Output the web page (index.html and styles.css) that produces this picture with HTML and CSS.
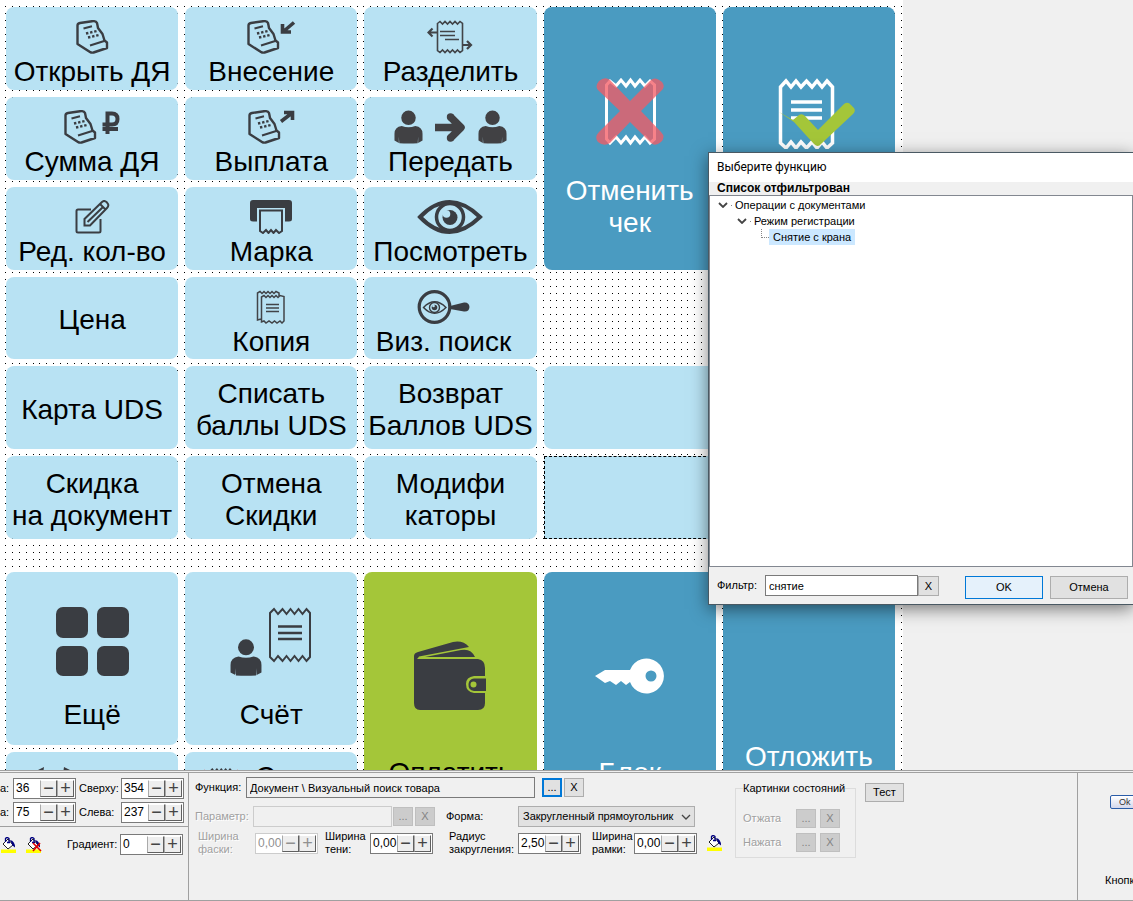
FILE: index.html
```html
<!DOCTYPE html>
<html lang="ru">
<head>
<meta charset="utf-8">
<title>Редактор клавиатуры</title>
<link rel="stylesheet" href="styles.css">
</head>
<body>
<svg class="defs" aria-hidden="true">
  <symbol id="register" viewBox="0 0 33 34">
    <path d="M1.500 24V5.500Q1.500 3.500 4 3L16 1.200Q20 .800 21 3Q21.500 5 22 8L26.500 14L28.500 20.500L31 22.500V28L17.500 32.500Q15.500 33 14 32Z" fill="none" stroke="#3a3d42" stroke-width="2.400" stroke-linejoin="round"/>
    <path d="M14 25.500L29 20.800M7.500 8.500L16 6.300" fill="none" stroke="#3a3d42" stroke-width="2"/>
    <path d="M10 13.500L21 11M12 17.500L23 15" fill="none" stroke="#3a3d42" stroke-width="2.400" stroke-dasharray="2.400 1.800"/>
  </symbol>
  <symbol id="person" viewBox="0 0 30 34">
    <circle cx="15" cy="7.500" r="7.500"/>
    <path d="M8 16Q15 18.500 22 16Q29.500 17 29.500 24V31L25 33.500V27L24.500 33.800Q15 34.500 5.500 33.800L5 27V33.500L.5 31V24Q.5 17 8 16Z"/>
  </symbol>
  <symbol id="receipt" viewBox="0 0 44 56">
    <path d="M2 6L6 2L10 7L14.500 2L18.500 7L22.500 2L26.500 7L30.500 2L34.500 7L38.500 2L42 6V50L38.500 54L34.500 49L30.500 54L26.500 49L22.500 54L18.500 49L14.500 54L10 49L6 54L2 50Z" fill="none" stroke="currentColor" stroke-width="2"/>
    <path d="M10 19.500H34M10 26H34M10 32H34" stroke="currentColor" stroke-width="2.300"/>
  </symbol>
  <symbol id="bucket" viewBox="0 0 16 16">
    <path d="M0 12.500H15V16H0Z" fill="#ff0"/>
    <path d="M2 7L7 2L12 8L7 12Z" fill="#fff" stroke="#222" stroke-width="1"/>
    <path d="M4.500 5V1.500Q6 -.5 8 1.500V6M6 5.500H9" fill="none" stroke="#00007f" stroke-width="1.300"/>
    <path d="M9 3Q14 4 14 10.500L11.500 8.500Z" fill="#00007f"/>
  </symbol>
</svg>
<div class="app">
  <main class="workspace">
    <section class="board">
      <div class="pad pad-top">
        <button class="tile"><svg width="33" height="34"><use href="#register"/></svg><span>Открыть ДЯ</span></button>
        <button class="tile"><svg width="49" height="34" viewBox="0 0 49 34"><use href="#register" width="33" height="34"/><path d="M47 2.500L37 11M35.500 4V12H44" fill="none" stroke="#3a3d42" stroke-width="3.600"/></svg><span>Внесение</span></button>
        <button class="tile"><svg width="46" height="34" viewBox="0 0 46 34"><g fill="none" stroke="#414448"><path d="M10.500 3.500L13 1.500L15.500 4L18 1.500L20.500 4L23 1.500L25.500 4L28 1.500L30.500 4L33 1.500L35.500 3.500V30.500L33 32.500L30.500 30L28 32.500L25.500 30L23 32.500L20.500 30L18 32.500L15.500 30L13 32.500L10.500 30.500Z" stroke-width="1.600"/><path d="M13 11.500H28M13 15.500H28M18 19.500H32" stroke-width="1.400"/><path d="M10 12.500H2M5.500 8.500L1.500 12.500L5.500 16.500M35 25H43M40 21L44 25L40 29" stroke-width="2.200"/></g></svg><span>Разделить</span></button>
        <button class="tile tall dark"><svg width="68" height="69" viewBox="0 0 68 69"><path d="M10.500 62V8L14 4L20 9L25 3L30 9L34.500 3L39 9L44 3L49 9L54 4L58.500 8V62L54 66L49 60L44 66L39 60L34.500 66L30 60L25 66L20 60L14 66Z" fill="none" stroke="#fff" stroke-width="3"/><path d="M34 24L55 3Q59-1 66 5Q70 10 65 14L45 34L65 55Q70 60 65 65Q59 70 55 66L34 45L14 66Q8 70 2 65Q-2 60 3 55L24 34L3 14Q-2 10 3 4Q9-1 14 3Z" fill="#f45b64" fill-opacity=".76"/></svg><span>Отменить<br>чек</span></button>
        <button class="tile tall dark" aria-label="Закрыть чек"><svg class="shift" width="78" height="72" viewBox="0 0 78 72"><path d="M2.500 66V10L8 4L13 10L18 4L23 10L28.500 4L34 10L39 4L44 10L49 4L54.500 10V66L49 71L44 65L39 71L34 65L28.500 71L23 65L18 71L13 65L8 71Z" fill="none" stroke="#fff" stroke-width="3.500"/><path d="M13 25H44M13 33H44M13 41H44" stroke="#fff" stroke-width="3.500"/><path d="M1 35L15 43L21 38Q24 36 27 39L40 53L66 27Q70 24 73 28L76 31Q78 34 75 37L43 67Q40 71 36 67L16 45Z" fill="#a4c639"/></svg></button>

        <button class="tile"><svg width="57" height="34" viewBox="0 0 57 34"><use href="#register" width="33" height="34"/><path d="M43.500 24V3.500H48Q53.500 3.500 53.500 9Q53.500 14.500 48 14.500H38.500M38.500 19H54" fill="none" stroke="#3a3d42" stroke-width="4"/></svg><span>Сумма ДЯ</span></button>
        <button class="tile"><svg width="47" height="34" viewBox="0 0 47 34"><use href="#register" width="33" height="34"/><path d="M33 11.500L44 3M36 2.500H44.500V10" fill="none" stroke="#3a3d42" stroke-width="3.600"/></svg><span>Выплата</span></button>
        <button class="tile"><svg width="113" height="34" viewBox="0 0 113 34" fill="#414144"><use href="#person" width="29" height="34"/><use href="#person" x="84" width="29" height="34"/><path d="M41 17.500H66M56.500 7L67 17.500L56.500 28" fill="none" stroke="#414144" stroke-width="7.500" stroke-linejoin="round"/><circle cx="56.500" cy="7" r="3.700"/><circle cx="56.500" cy="28" r="3.700"/></svg><span>Передать</span></button>

        <button class="tile"><svg width="35" height="34" viewBox="0 0 35 34"><g fill="none" stroke="#3a3d42" stroke-width="2"><path d="M16 9.500H3Q1.500 9.500 1.500 11V31Q1.500 32.500 3 32.500H24Q25.500 32.500 25.500 31V19"/><path d="M9.500 25.500V19L27 2Q29-.0 31.500 2L33 4Q34 6 32 8L15 25.500ZM25 4L31 10M12.500 22L28 7"/></g></svg><span>Ред. кол-во</span></button>
        <button class="tile"><svg width="42" height="34" viewBox="0 0 42 34"><path d="M3 0H39Q42 0 42 3V19Q42 21.500 39 21.500H35V8H7V21.500H3Q0 21.500 0 19V3Q0 0 3 0Z" fill="#3a3d42"/><path d="M10 10.500H32V31L29 33L26 30L23.500 33L21 30L18.500 33L16 30L13 33L10 31Z" fill="#b8e2f3" stroke="#3a3d42" stroke-width="2"/></svg><span>Марка</span></button>
        <button class="tile"><svg width="66" height="34" viewBox="0 0 66 34"><path d="M3 17Q32-13 63 17Q32 47 3 17Z" fill="none" stroke="#3a3d42" stroke-width="4"/><circle cx="33" cy="17" r="13.500" fill="none" stroke="#3a3d42" stroke-width="3.500"/><circle cx="33" cy="17.500" r="7.500" fill="#3a3d42"/><circle cx="29.500" cy="14" r="3.800" fill="#b8e2f3"/></svg><span>Посмотреть</span></button>

        <button class="tile plain">Цена</button>
        <button class="tile"><svg width="30" height="34" viewBox="0 0 30 34" fill="none" stroke="#414448"><path d="M5 29L1.500 30V3L4 1.500L6 3.500L8 1.500L10 3.500L12 1.500L14 3.500L16 1.500L18 3.500L20 1.500L23 3V6M5.500 7L8 5.500L10 7.500L12 5.500L14 7.500L16 5.500L18 7.500L20 5.500L22 7.500L24 5.500L28 6.500V31L26 33L24 31L21 33L18.500 31L16 33L13 31L10 33L8 31L5.500 32Z" stroke-width="1.500"/><path d="M10 14.500H23M10 18H23M10 21.500H23" stroke-width="1.500"/></svg><span>Копия</span></button>
        <button class="tile left"><svg width="53" height="34" viewBox="0 0 53 34"><circle cx="17.500" cy="17" r="15.300" fill="none" stroke="#3a3d42" stroke-width="3.200"/><path d="M33 16L47 12.500Q52 12 52.500 17Q52 22 47 21.500L33 19Z" fill="#3a3d42"/><g fill="none" stroke="#3a3d42" stroke-width="1.400"><path d="M6.500 17.500Q17.500 6 29 17.500Q17.500 29 6.500 17.500Z"/><circle cx="17.500" cy="17.500" r="5"/></g><circle cx="17.500" cy="17.500" r="2.800" fill="#3a3d42"/><circle cx="16.500" cy="16" r="1.300" fill="#b8e2f3"/></svg><span>Виз. поиск</span></button>
        <div class="vacant"></div><div class="vacant"></div>

        <button class="tile plain">Карта UDS</button>
        <button class="tile plain">Списать<br>баллы UDS</button>
        <button class="tile plain">Возврат<br>Баллов UDS</button>
        <button class="tile wide" aria-label="Пустая кнопка"></button>

        <button class="tile plain">Скидка<br>на документ</button>
        <button class="tile plain">Отмена<br>Скидки</button>
        <button class="tile plain">Модифи<br>каторы</button>
        <button class="tile wide selected" aria-label="Пустая кнопка"></button>
      </div>
      <div class="pad pad-bottom">
        <button class="tile square"><svg width="73" height="69" viewBox="0 0 73 69" fill="#3a3d42"><rect width="32" height="31" rx="7"/><rect x="41" width="32" height="31" rx="7"/><rect y="39" width="32" height="30" rx="7"/><rect x="41" y="39" width="32" height="30" rx="7"/></svg><span>Ещё</span></button>
        <button class="tile square"><svg width="82" height="69" viewBox="0 0 82 69" fill="#3a3d42"><use href="#person" y="32" width="32" height="37"/><use href="#receipt" x="38" width="44" height="56"/></svg><span>Счёт</span></button>
        <button class="tile tower green"><svg width="73" height="69" viewBox="0 0 73 69" fill="#3a3d42"><path d="M3 18H64Q71 19 71 27V35H60Q52 36 52 43Q52 51 60 52H71V62Q71 69 64 69H6Q0 69 0 62V15Q0 12 4 11L39 1Q49-1 55 6L5 15.500L4 17Z"/><path d="M11 16L47 9Q57 7 61 16Z"/><path d="M72 37.500V50H60Q54 49 54.500 43Q55 38 60 37.500Z"/><circle cx="59.500" cy="43.500" r="3" fill="#a4c639"/></svg><span>Оплатить</span></button>
        <button class="tile tower dark"><svg width="69" height="69" viewBox="0 0 69 69"><path fill="#fff" fill-rule="evenodd" d="M0 35L10 29H35A17.500 17.500 0 1 1 35 41L31 44L26 40L21 44L15 40L10 42ZM56 29.500A5.500 5.500 0 1 0 56 40.500A5.500 5.500 0 1 0 56 29.500Z"/></svg><span>Блок</span></button>
        <button class="tile tower dark last"><span>Отложить</span></button>
        <button class="tile row" aria-label="Перенос"><svg width="60" height="30" viewBox="0 0 60 30"><path d="M10 4L18 0L17 7L5 10ZM38 0L46 4L51 10L37 7Z" fill="#3a3d42"/></svg></button>
        <button class="tile row second"><svg width="44" height="40" viewBox="0 0 44 40"><use href="#receipt" x="10" y="4" width="24" height="36"/><path d="M4 10L40 40M40 10L4 40" stroke="#e06770" stroke-width="4"/></svg><span>Счет</span></button>
      </div>
    </section>

    <section class="dialog" role="dialog" aria-labelledby="dlg-title">
      <h1 id="dlg-title">Выберите функцию</h1>
      <p class="state">Список отфильтрован</p>
      <div class="tree" role="tree">
        <div class="node" role="treeitem"><svg width="10" height="6"><path d="M1 1L5 5L9 1" fill="none" stroke="#444" stroke-width="1.800"/></svg><i></i><span>Операции с документами</span></div>
        <div class="node level2" role="treeitem"><svg width="10" height="6"><path d="M1 1L5 5L9 1" fill="none" stroke="#444" stroke-width="1.800"/></svg><i></i><span>Режим регистрации</span></div>
        <div class="node level3" role="treeitem"><b></b><span class="picked">Снятие с крана</span></div>
      </div>
      <div class="dialog-foot">
        <label for="filter">Фильтр:</label>
        <input id="filter" class="field" type="text" value="снятие">
        <button class="btn small">X</button>
        <button class="btn ok">OK</button>
        <button class="btn cancel">Отмена</button>
      </div>
    </section>
  </main>

  <footer class="props">
    <section class="geometry">
      <div class="geo-grid">
        <label for="h">а:</label>
        <div class="spin"><input id="h" value="36"><button aria-label="Меньше">−</button><button aria-label="Больше">+</button></div>
        <label for="top">Сверху:</label>
        <div class="spin"><input id="top" value="354"><button aria-label="Меньше">−</button><button aria-label="Больше">+</button></div>
        <label for="w">а:</label>
        <div class="spin"><input id="w" value="75"><button aria-label="Меньше">−</button><button aria-label="Больше">+</button></div>
        <label for="left">Слева:</label>
        <div class="spin"><input id="left" value="237"><button aria-label="Меньше">−</button><button aria-label="Больше">+</button></div>
      </div>
      <div class="fill">
        <button class="paint" aria-label="Заливка"><svg width="16" height="16"><use href="#bucket"/></svg></button>
        <button class="paint" aria-label="Убрать заливку"><svg width="16" height="16" viewBox="0 0 16 16"><use href="#bucket"/><path d="M7 6L15 14M14 6L7 14" stroke="#e00000" stroke-width="1.600"/></svg></button>
        <label for="grad">Градиент:</label>
        <div class="spin"><input id="grad" value="0"><button aria-label="Меньше">−</button><button aria-label="Больше">+</button></div>
      </div>
    </section>

    <section class="details">
      <div class="lines">
        <div class="line first">
          <label class="w-func" for="func">Функция:</label>
          <input id="func" class="field readonly" value="Документ \ Визуальный поиск товара" readonly>
          <button class="btn small focus">...</button>
          <button class="btn small">X</button>
        </div>
        <div class="line">
          <label class="w-param off" for="param">Параметр:</label>
          <input id="param" class="field disabled" disabled>
          <button class="btn small" disabled>...</button>
          <button class="btn small" disabled>X</button>
          <label class="w-form" for="form">Форма:</label>
          <div class="choice"><select id="form"><option>Закругленный прямоугольник</option></select><svg width="10" height="6"><path d="M1 1L5 5L9 1" fill="none" stroke="#444" stroke-width="1.300"/></svg></div>
        </div>
        <div class="line third">
          <label class="w-bevel off" for="bevel">Ширина<br>фаски:</label>
          <div class="spin off"><input id="bevel" value="0,00" disabled><button disabled aria-label="Меньше">−</button><button disabled aria-label="Больше">+</button></div>
          <label class="w-shadow" for="shadow">Ширина<br>тени:</label>
          <div class="spin"><input id="shadow" value="0,00"><button aria-label="Меньше">−</button><button aria-label="Больше">+</button></div>
          <label class="w-radius" for="radius">Радиус<br>закругления:</label>
          <div class="spin"><input id="radius" value="2,50"><button aria-label="Меньше">−</button><button aria-label="Больше">+</button></div>
          <label class="w-frame" for="frame">Ширина<br>рамки:</label>
          <div class="spin"><input id="frame" value="0,00"><button aria-label="Меньше">−</button><button aria-label="Больше">+</button></div>
          <button class="paint" aria-label="Цвет рамки"><svg width="16" height="16"><use href="#bucket"/></svg></button>
        </div>
      </div>
      <fieldset class="images">
        <legend>Картинки состояний</legend>
        <div class="pair"><span class="off">Отжата</span><button class="btn small" disabled>...</button><button class="btn small" disabled>X</button></div>
        <div class="pair"><span class="off">Нажата</span><button class="btn small" disabled>...</button><button class="btn small" disabled>X</button></div>
      </fieldset>
      <button class="btn test">Тест</button>
    </section>

    <section class="preview">
      <button class="mini">Ok</button>
      <span>Кнопка</span>
    </section>
  </footer>
</div>
</body>
</html>
```
FILE: styles.css
```css
* { box-sizing: border-box; }
body { margin: 0; background: #f0f0f0; color: #000; font: 11px/13px "Liberation Sans", Arial, sans-serif; overflow: hidden; }
button, input, select { font: inherit; color: inherit; margin: 0; padding: 0; border-radius: 0; }
.defs { position: absolute; width: 0; height: 0; }

.app { display: flex; flex-direction: column; height: 100vh; }
.workspace { position: relative; flex: 1; min-height: 0; overflow: hidden; display: grid; grid-template-columns: 903fr 230fr; }

.board {
  min-height: 0;
  padding: 7px 8px 0 6px;
  background-color: #fff;
  background-image: url("data:image/svg+xml,%3Csvg xmlns='http://www.w3.org/2000/svg' width='2000' height='7'%3E%3Cpath d='M5 6.5H2000' stroke='%23000' stroke-dasharray='1 5.893' shape-rendering='crispEdges'/%3E%3C/svg%3E");
  background-repeat: repeat-y;
}
.pad { display: grid; grid-template-columns: repeat(5, 1fr); gap: 7px; }
.pad-top { grid-template-rows: repeat(6, 1fr); min-height: 532px; }
.pad-bottom { grid-template-rows: 173px 173px; margin-top: 33px; }

.tile {
  display: flex; flex-direction: column; align-items: center; justify-content: flex-start; gap: 2px;
  min-width: 0; padding: 13px 0 0; border: 0; border-radius: 8px;
  background: #b8e2f3; color: #000; font-size: 28px; line-height: 32px; white-space: nowrap;
}
.tile svg { flex: none; display: block; color: #3a3d42; }
.tile.plain { justify-content: center; padding-top: 4px; }
.tile.left { padding-right: 14px; }
.tile.wide { grid-column: span 2; }
.tile.dark { background: #4a9bc1; color: #fff; }
.tile.green { background: #a4c639; }
.tile.tall { grid-row: span 3; padding-top: 70px; gap: 29px; }
.tile.selected { border: 1px dashed #000; border-radius: 0; }
.tile.square { padding-top: 35px; gap: 23px; }
.tile.tower { grid-row: span 2; padding-top: 69px; gap: 47px; }
.tile.last { padding-top: 169px; }
.tile.row { flex-direction: row; align-items: flex-start; padding: 15px 0 0 20px; }
.tile.second { padding: 9px 0 0 14px; gap: 12px; }
.tall .shift { margin-left: 16px; }

.dialog {
  position: absolute; top: 152px; right: 0; width: 425px; height: 453px;
  display: flex; flex-direction: column;
  border: 1px solid #4a5963; border-right-width: 0; background: #f0f0f0;
  box-shadow: 0 4px 16px rgba(0, 0, 0, .5);
}
.dialog h1 { margin: 0; padding: 0 8px; background: #fff; font: 12px/29px Roboto, "Noto Sans", sans-serif; }
.state { margin: 0; padding: 0 8px; font-weight: bold; font-size: 12px; line-height: 13px; }
.tree { flex: 1; border: 1px solid #828790; background: #fff; padding: 1px 8px; }
.node { display: flex; align-items: center; height: 16px; }
.node i { width: 1px; height: 1px; margin: 0 3px; background: #888; }
.level2 { padding-left: 19px; }
.level3 { padding-left: 43px; }
.level3 b { width: 8px; height: 9px; align-self: flex-start; border: dotted #888; border-width: 0 0 1px 1px; }
.picked { background: #cce8ff; line-height: 16px; padding: 0 4px; }
.dialog-foot { display: flex; padding: 8px 5px 5px 8px; }
.dialog-foot label { width: 48px; line-height: 21px; }
.dialog-foot .field { flex: 1; min-width: 0; }
.dialog-foot .ok, .dialog-foot .cancel { width: 78px; height: 23px; margin-top: 1px; }
.dialog-foot .ok { margin-left: 26px; background: #e5f1fb; border-color: #0078d7; }
.dialog-foot .cancel { margin-left: 7px; }

.field { height: 21px; padding: 0 3px; border: 1px solid #7a7a7a; background: #fff; }
.field.readonly { background: #f0f0f0; }
.field.disabled { background: #f0f0f0; border: 1px solid #ccc; }
.btn { flex: none; display: flex; align-items: center; justify-content: center; height: 19px; border: 1px solid #adadad; background: #e1e1e1; }
.btn.small { width: 20px; }
.dialog-foot .small { width: 21px; height: 20px; margin-top: 1px; }
.btn.focus { border: 2px solid #0078d7; }
.btn:disabled { border-color: #bfbfbf; background: #ccc; color: #838383; }
.off { color: #a0a0a0; text-shadow: 1px 1px #fff; }

.props {
  flex: none; display: grid; grid-template-columns: 188px 1fr 56px; min-height: 131px; overflow: hidden;
  border-top: 3px double #a0a0a0; border-bottom: 1px solid #a0a0a0; background: #f0f0f0;
}
.geo-grid { display: grid; grid-template-columns: 10px 63px 39px 63px; column-gap: 3px; row-gap: 3px; padding: 5px 0 3px; align-items: center; border-bottom: 1px solid #a0a0a0; }
.geo-grid > label { text-align: left; white-space: nowrap; }
.fill { display: flex; align-items: center; padding: 7px 0 0 1px; gap: 9px; }
.fill label { width: 50px; margin-left: 16px; white-space: nowrap; }
.fill .spin { margin-left: -6px; }
.paint { flex: none; width: 16px; height: 16px; border: 0; background: none; }
.paint svg { display: block; }

.spin { flex: none; display: flex; width: 63px; height: 21px; padding: 1px; border: 1px solid #7a7a7a; background: #fff; }
.spin input { flex: 1; min-width: 0; width: 0; padding: 0 0 0 1px; border: 0; background: none; font-size: 12px; }
.spin button {
  flex: none; display: flex; align-items: center; justify-content: center; width: 17px; height: 17px;
  border: 1px solid; border-color: #fff #606060 #606060 #aaa; background: #eee; color: #444; font-size: 18px; line-height: 15px;
}
.spin.off { border-color: #ccc; }
.spin.off input, .spin.off button { color: #909090; }

.details { display: flex; align-items: flex-start; border-left: 1px solid #a0a0a0; min-width: 0; }
.lines { flex: none; width: 546px; padding: 4px 0 0 6px; }
.line { display: flex; align-items: center; height: 29px; white-space: nowrap; }
.line.first { height: 21px; margin-bottom: 4px; }
.line.third { height: 24px; }
.w-func { flex: 0 0 51px; }
.first .field { width: 289px; margin-right: 7px; }
.first .small + .small { margin-left: 2px; }
.w-param { flex: 0 0 58px; }
.line .disabled { width: 139px; margin-right: 1px; }
.line .disabled ~ .small + .small { margin-left: 2px; }
.w-form { flex: 0 0 72px; margin-left: 11px; }
.choice { display: grid; align-items: center; width: 177px; height: 21px; }
.choice > * { grid-area: 1 / 1; }
.choice select { appearance: none; width: 100%; height: 100%; padding: 0 4px; border: 1px solid #adadad; background: #e1e1e1; }
.choice svg { justify-self: end; margin-right: 4px; pointer-events: none; }
.w-bevel { flex: 0 0 57px; padding-left: 3px; margin-right: 3px; }
.w-shadow { flex: 0 0 45px; margin-left: 7px; }
.w-radius { flex: 0 0 69px; margin-left: 16px; }
.w-frame { flex: 0 0 42px; margin-left: 11px; }
.third .paint { margin-left: 10px; }

.images { flex: none; width: 121px; height: 76px; margin: 9px 0 0; padding: 11px 0 0 7px; border: 1px solid #dcdcdc; }
.images legend { padding: 0; white-space: nowrap; }
.pair { display: flex; gap: 4px; height: 24px; align-items: center; }
.pair span { width: 49px; }
.test { width: 39px; margin: 10px 0 0 9px; }

.preview { border-left: 1px solid #a0a0a0; display: flex; flex-direction: column; justify-content: space-between; padding: 22px 0 13px 27px; overflow: hidden; }
.mini { width: 40px; height: 14px; margin-left: 5px; padding: 0 8px; text-align: left; border: 1px solid #2a5ca8; border-radius: 2px; background: linear-gradient(#fff, #d4d8ec); font-size: 9px; line-height: 11px; color: #333; }
```
